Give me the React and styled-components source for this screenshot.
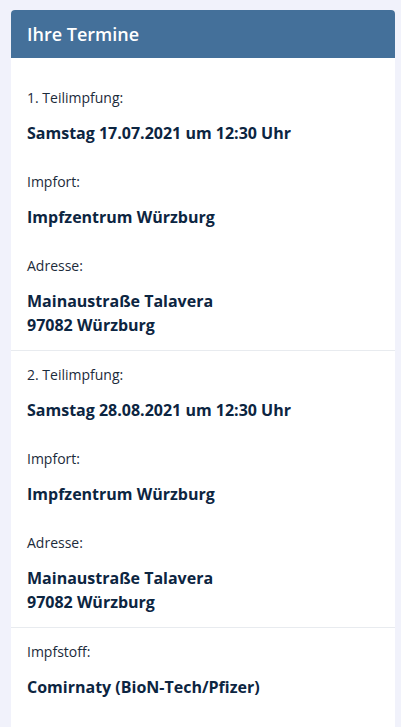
import React from "react";
import styled, { createGlobalStyle } from "styled-components";

const GlobalStyle = createGlobalStyle`
	html, body {
		margin: 0;
		padding: 0;
		background: #f1f2fb;
		font-family: "Open Sans", "Liberation Sans", sans-serif;
	}
`;

const Page = styled.div`
	padding: 10px 6px 0 11px;
	min-height: 727px;
	box-sizing: border-box;
`;

const Card = styled.div`
	background: #fff;
	border-radius: 4px 4px 0 0;
	overflow: hidden;
	min-height: 717px;
`;

const Header = styled.h2`
	margin: 0;
	height: 48px;
	display: flex;
	align-items: center;
	padding: 0 16px;
	background: #44709a;
	color: #fff;
	font-size: 18px;
	font-weight: 600;
`;

const Body = styled.div`
	padding-top: 16px;
`;

const Section = styled.div`
	padding: 14px 16px 13px;
	& + & {
		border-top: 1px solid #e8ebef;
	}
`;

const Field = styled.div`
	& + & {
		margin-top: 27px;
	}
`;

const Label = styled.p`
	margin: 0 0 13px;
	font-size: 14px;
	line-height: 20px;
	color: #1c2b3b;
`;

const Value = styled.p`
	margin: 0;
	font-size: 16px;
	line-height: 24px;
	font-weight: 700;
	color: #0c2541;
`;

const appointments = [
	{ label: "1. Teilimpfung:", date: "Samstag 17.07.2021 um 12:30 Uhr" },
	{ label: "2. Teilimpfung:", date: "Samstag 28.08.2021 um 12:30 Uhr" },
];

const App = () => {
	return (
		<Page>
			<GlobalStyle />
			<Card>
				<Header>Ihre Termine</Header>
				<Body>
					{appointments.map((a) => (
						<Section key={a.label}>
							<Field>
								<Label>{a.label}</Label>
								<Value>{a.date}</Value>
							</Field>
							<Field>
								<Label>Impfort:</Label>
								<Value>Impfzentrum Würzburg</Value>
							</Field>
							<Field>
								<Label>Adresse:</Label>
								<Value>
									Mainaustraße Talavera
									<br />
									97082 Würzburg
								</Value>
							</Field>
						</Section>
					))}
					<Section>
						<Field>
							<Label>Impfstoff:</Label>
							<Value>Comirnaty (BioN-Tech/Pfizer)</Value>
						</Field>
					</Section>
				</Body>
			</Card>
		</Page>
	);
};

export default App;
